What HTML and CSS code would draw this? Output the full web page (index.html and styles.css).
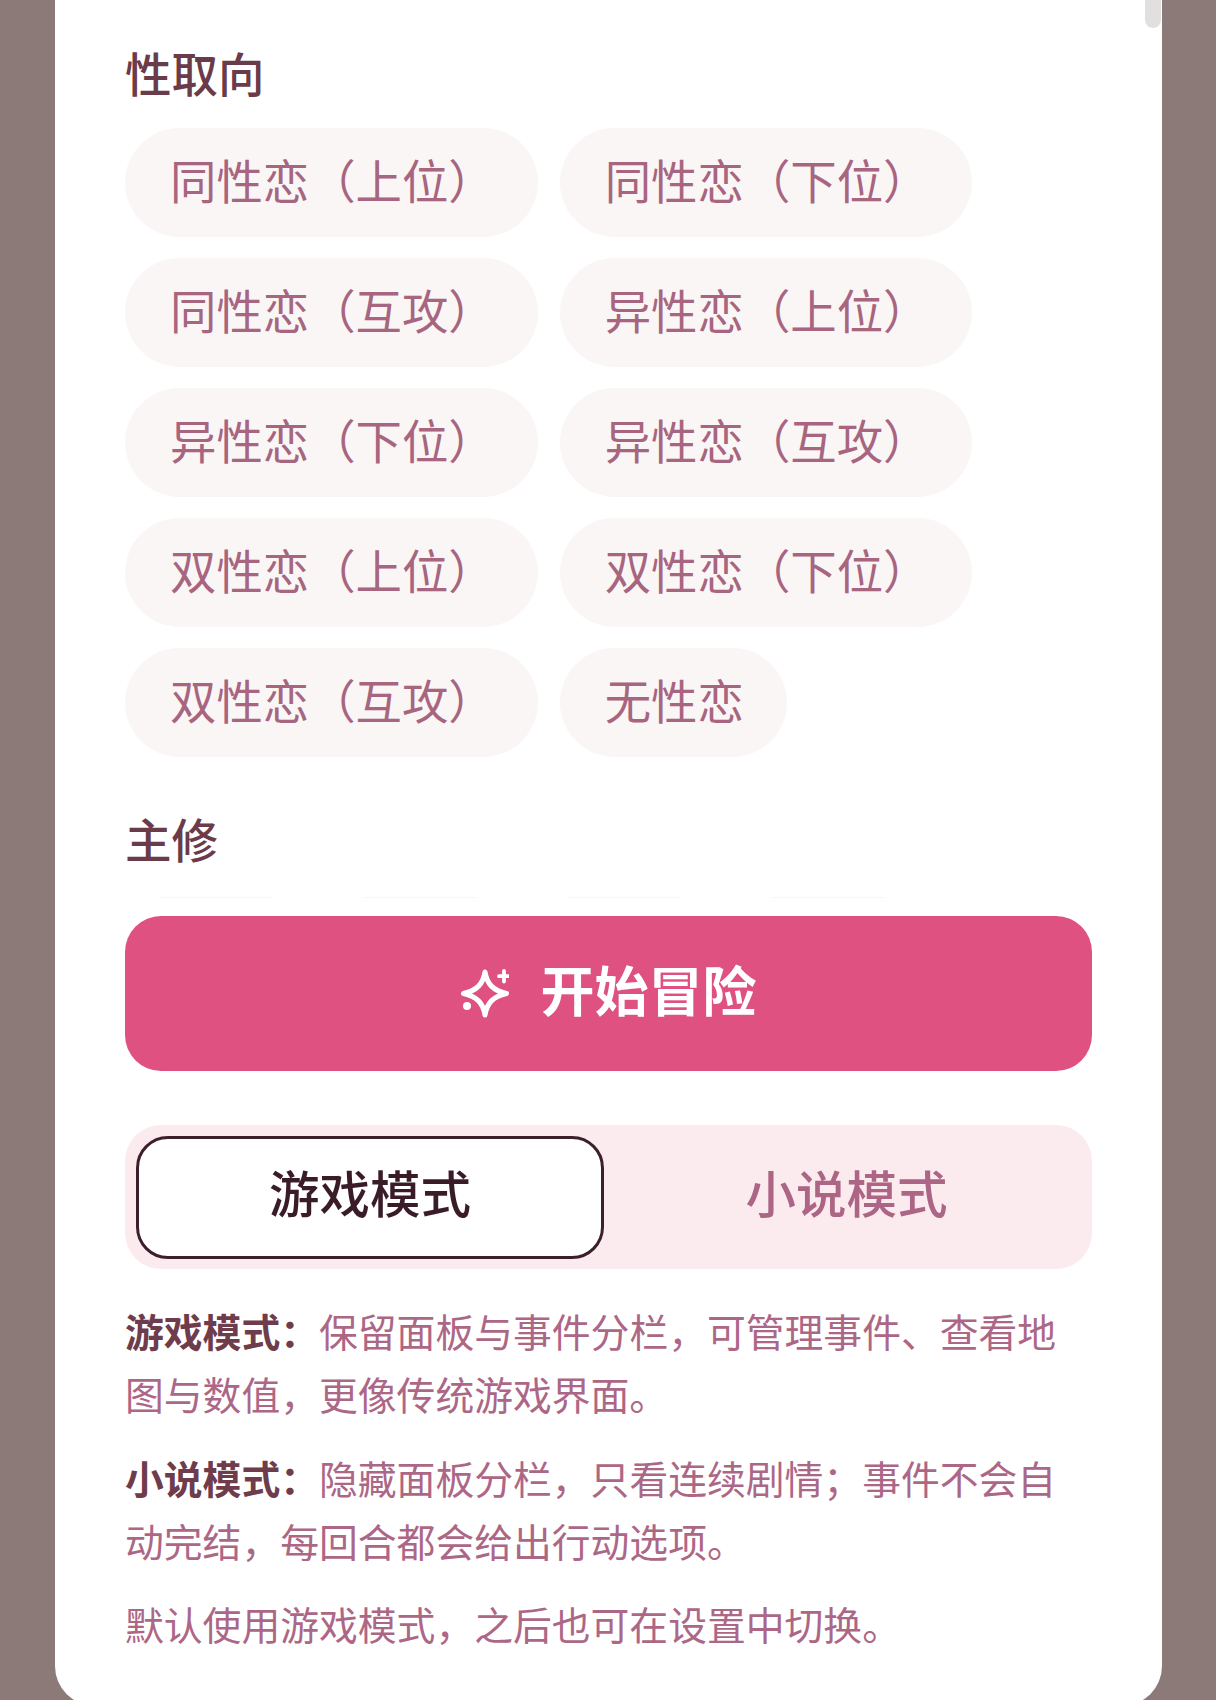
FILE: index.html
```html
<!DOCTYPE html>
<html lang="zh-CN">
<head>
<meta charset="utf-8">
<title>开始冒险</title>
<link rel="stylesheet" href="styles.css">
</head>
<body>
<div class="page">
  <main class="card">
    <div class="scrollbar"></div>
    <section class="scroll">
      <h2 class="label">性取向</h2>
      <div class="pills">
        <span class="pill">同性恋（上位）</span>
        <span class="pill">同性恋（下位）</span>
        <span class="pill">同性恋（互攻）</span>
        <span class="pill">异性恋（上位）</span>
        <span class="pill">异性恋（下位）</span>
        <span class="pill">异性恋（互攻）</span>
        <span class="pill">双性恋（上位）</span>
        <span class="pill">双性恋（下位）</span>
        <span class="pill">双性恋（互攻）</span>
        <span class="pill">无性恋</span>
      </div>
      <h2 class="label label-next">主修</h2>
      <div class="pills pills-clipped">
        <span class="pill pill-blank"></span>
        <span class="pill pill-blank"></span>
        <span class="pill pill-blank"></span>
        <span class="pill pill-blank"></span>
      </div>
    </section>
    <section class="footer">
      <button class="start" type="button">
        <svg class="spark" viewBox="0 0 48 49" width="48" height="49" aria-hidden="true">
          <path class="spark-line" d="M24 3C26 15 32 21.500 45.500 24.500C32 27.500 26 34 24 46C22 34 16 27.500 2.500 24.500C16 21.500 22 15 24 3Z"/>
          <path class="spark-plus" d="M43 2V12.500M38 7.200H48"/>
          <circle class="spark-dot" cx="6" cy="37" r="4"/>
        </svg>
        <span class="start-text">开始冒险</span>
      </button>
      <div class="segment">
        <span class="seg seg-on">游戏模式</span>
        <span class="seg seg-off">小说模式</span>
      </div>
      <div class="desc">
        <p><b>游戏模式：</b>保留面板与事件分栏，可管理事件、查看地图与数值，更像传统游戏界面。</p>
        <p><b>小说模式：</b>隐藏面板分栏，只看连续剧情；事件不会自动完结，每回合都会给出行动选项。</p>
        <p>默认使用游戏模式，之后也可在设置中切换。</p>
      </div>
    </section>
  </main>
</div>
</body>
</html>
```

FILE: styles.css
```css
* {
  box-sizing: border-box;
}

html,
body {
  margin: 0;
  height: 1700px;
  overflow: hidden;
}

body {
  background: #8b7a78;
  font-family: "Noto Sans CJK SC", "Noto Sans", sans-serif;
}

.page {
  height: 1700px;
  padding: 0 55px;
  overflow: hidden;
}

.card {
  position: relative;
  width: 1107px;
  height: 1706px;
  padding: 0 70px;
  background: #fff;
  border-radius: 0 0 40px 40px;
  filter: blur(0.5px);
}

.scrollbar {
  position: absolute;
  top: -10px;
  right: 1px;
  width: 16px;
  height: 38px;
  border-radius: 8px;
  background: #e2dfdf;
}

.scroll {
  height: 898px;
  padding-top: 42px;
  overflow: hidden;
}

.label {
  margin: 0;
  font-size: 46.500px;
  line-height: 60px;
  font-weight: 500;
  color: #6a3b49;
}

.label-next {
  margin-top: 51px;
}

.pills {
  display: flex;
  flex-wrap: wrap;
  gap: 21px 22px;
  margin-top: 26px;
}

.pills-clipped {
  margin-top: 29px;
  flex-wrap: nowrap;
}

.pill {
  height: 109px;
  padding: 0 43px 0 45px;
  border-radius: 54.500px;
  background: #faf6f6;
  color: #a76580;
  font-size: 46.400px;
  line-height: 101px;
  white-space: nowrap;
}

.pill-blank {
  width: 182px;
  border-radius: 40px;
}

.footer {
  padding-top: 18px;
}

.start {
  display: flex;
  align-items: center;
  justify-content: center;
  gap: 32px;
  width: 967px;
  height: 155px;
  padding: 0;
  border: 0;
  border-radius: 36px;
  background: #df5180;
  color: #fff;
  font-family: inherit;
  font-size: 54px;
  font-weight: 700;
}

.start-text {
  padding-bottom: 10px;
}

.spark {
  display: block;
  flex: none;
}

.spark-line {
  fill: none;
  stroke: #fff;
  stroke-width: 5;
  stroke-linejoin: round;
}

.spark-plus {
  fill: none;
  stroke: #fff;
  stroke-width: 3.800;
  stroke-linecap: round;
}

.spark-dot {
  fill: #fff;
}

.segment {
  display: grid;
  grid-template-columns: 468px 1fr;
  align-items: center;
  height: 144px;
  margin-top: 54px;
  padding: 10px 11px;
  border-radius: 36px;
  background: #fbebef;
}

.seg {
  text-align: center;
  font-size: 50.500px;
  font-weight: 500;
}

.seg-on {
  height: 123px;
  line-height: 104px;
  border: 3px solid #3d1f2b;
  border-radius: 32px;
  background: #fff;
  color: #3a1c28;
}

.seg-off {
  height: 123px;
  padding-left: 8px;
  line-height: 110px;
  color: #ac6585;
}

.desc {
  margin-top: 30px;
  color: #ad6786;
  font-size: 38.800px;
  line-height: 63px;
}

.desc p {
  margin: 0 0 20.500px;
}

.desc b {
  font-weight: 700;
  color: #6e3c4b;
}
```
